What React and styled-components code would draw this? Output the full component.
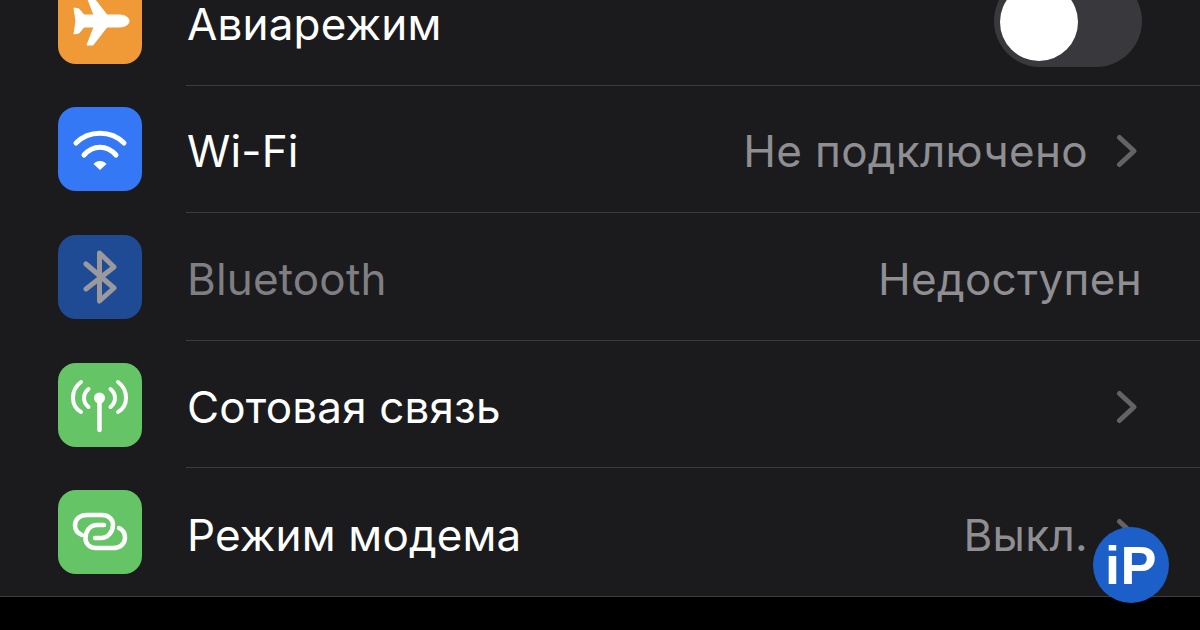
import React from "react";
import styled, { createGlobalStyle } from "styled-components";

const GlobalStyle = createGlobalStyle`
  html, body {
    margin: 0;
    padding: 0;
    background: #000;
  }
`;

const Page = styled.div`
  position: relative;
  width: 1200px;
  height: 630px;
  overflow: hidden;
  background: #000;
  font-family: Inter, "Liberation Sans", sans-serif;
`;

const List = styled.div`
  margin-top: -42px;
  background: #1b1b1d;
  border-bottom: 1px solid #3d3d40;
`;

const Row = styled.div`
  height: 127.6px;
  box-sizing: border-box;
  padding-left: 58px;
  display: flex;
  align-items: center;
  gap: 44px;
`;

const IconBox = styled.div`
  width: 84px;
  height: 84px;
  flex: none;
  border-radius: 18px;
  display: flex;
  align-items: center;
  justify-content: center;
  background: ${({ $bg }) => $bg};
`;

const RowBody = styled.div`
  flex: 1;
  align-self: stretch;
  display: flex;
  align-items: center;
  justify-content: space-between;
  padding-right: 58px;
  border-bottom: ${({ $last }) => ($last ? "none" : "1px solid #3d3d40")};
`;

const Label = styled.div`
  margin: 5px 0 0 1px;
  font-size: 44px;
  line-height: 44px;
  font-weight: 400;
  letter-spacing: 0.15px;
  color: ${({ $dim }) => ($dim ? "#7f7f83" : "#fff")};
`;

const Detail = styled.div`
  margin-top: 5px;
  display: flex;
  align-items: center;
  gap: 28px;
`;

const Value = styled.div`
  font-size: 44px;
  line-height: 44px;
  letter-spacing: 0.3px;
  color: #8e8e93;
`;

const ChevronMark = styled.svg`
  margin-right: 4px;
`;

const Toggle = styled.div`
  width: 148px;
  height: 92px;
  border-radius: 46px;
  background: #39393d;
  padding: 8px 6px;
  box-sizing: border-box;
`;

const Knob = styled.div`
  width: 78px;
  height: 78px;
  border-radius: 50%;
  background: #fff;
`;

const Badge = styled.div`
  position: absolute;
  left: 1093px;
  top: 527px;
  width: 76px;
  height: 76px;
  border-radius: 50%;
  background: #1d5fc9;
  display: flex;
  align-items: center;
  justify-content: center;
  color: #fff;
  font-family: "Liberation Sans", Arial, sans-serif;
  font-weight: 700;
  font-size: 54px;
  line-height: 76px;
  letter-spacing: 0.5px;
`;

const Chevron = () => (
  <ChevronMark width="22" height="34" viewBox="0 0 22 34" fill="none">
    <path d="M3.5 3.5 L18 17 L3.5 30.5" stroke="#636366" strokeWidth="5" strokeLinecap="round" strokeLinejoin="round" />
  </ChevronMark>
);

const Plane = () => (
  <svg width="84" height="84" viewBox="0 0 84 84" fill="#fff">
    <path d="M71 41 C71 37 66 35 61 35 L49 35 L35 17 L29 17 L36 35 L26 35 L21 29 L16 28 L18 41 L16 54 L21 53 L26 47 L36 47 L29 65 L35 65 L49 47 L61 47 C66 47 71 45 71 41 Z" stroke="#fff" strokeWidth="1" strokeLinejoin="round" />
  </svg>
);

const Wifi = () => (
  <svg width="84" height="84" viewBox="0 0 84 84" fill="none">
    <path d="M18 36 C31 23 53 23 66 36" stroke="#fff" strokeWidth="5" strokeLinecap="round" />
    <path d="M26 48 C35 37.500 49 37.500 58 48" stroke="#fff" strokeWidth="5" strokeLinecap="round" />
    <path d="M35.500 57 C38.500 53 45.500 53 48.500 57 L42 63 Z" fill="#fff" />
  </svg>
);

const Bluetooth = () => (
  <svg width="84" height="84" viewBox="0 0 84 84" fill="none">
    <path d="M28 29 L56 53 L41.500 66 L41.500 18 L56 32 L28 54" stroke="#9a9a9e" strokeWidth="5" strokeLinecap="round" strokeLinejoin="round" />
  </svg>
);

const Antenna = () => (
  <svg width="84" height="84" viewBox="0 0 84 84" fill="none" stroke="#fff" strokeLinecap="round">
    <path d="M41.500 38 L41.500 67" strokeWidth="4.500" />
    <circle cx="41.500" cy="35" r="5.500" fill="#fff" stroke="none" />
    <path d="M30.500 26 C24.500 31 24.500 39 30.500 44" strokeWidth="4" />
    <path d="M52.500 26 C58.500 31 58.500 39 52.500 44" strokeWidth="4" />
    <path d="M23 19 C12.300 27 12.300 43 23 49" strokeWidth="4" />
    <path d="M60 19 C70.700 27 70.700 43 60 49" strokeWidth="4" />
  </svg>
);

const Chain = () => (
  <svg width="84" height="84" viewBox="0 0 84 84" fill="none" stroke="#fff" strokeWidth="4.500" strokeLinecap="round">
    <path d="M24 45 C19 43 17 39 17 35.500 C17 29 22 25 29 25 L44 25 C50 25 55 29 55 34.500 C55 42 50 48 43 48 L37 48" />
    <path d="M61 38 C65 40 67 44 67 47.500 C67 54 62 58 55 58 L38 58 C32 58 27.500 54 27.500 48.500 C27.500 41 32 35 39 35 L46 35" />
  </svg>
);

const rows = [
  { id: "air", label: "Авиарежим", bg: "#f09a37", icon: <Plane />, toggle: true },
  { id: "wifi", label: "Wi-Fi", bg: "#3478f6", icon: <Wifi />, value: "Не подключено", chevron: true },
  { id: "bt", label: "Bluetooth", bg: "#1f4a94", icon: <Bluetooth />, value: "Недоступен", dim: true },
  { id: "cell", label: "Сотовая связь", bg: "#65c466", icon: <Antenna />, chevron: true },
  { id: "modem", label: "Режим модема", bg: "#65c466", icon: <Chain />, value: "Выкл.", chevron: true, last: true },
];

export default function App() {
  return (
    <Page>
      <GlobalStyle />
      <List>
        {rows.map((r) => (
          <Row key={r.id}>
            <IconBox $bg={r.bg}>{r.icon}</IconBox>
            <RowBody $last={r.last}>
              <Label $dim={r.dim}>{r.label}</Label>
              {r.toggle ? (
                <Toggle>
                  <Knob />
                </Toggle>
              ) : (
                <Detail>
                  {r.value && <Value>{r.value}</Value>}
                  {r.chevron && <Chevron />}
                </Detail>
              )}
            </RowBody>
          </Row>
        ))}
      </List>
      <Badge>iP</Badge>
    </Page>
  );
}
